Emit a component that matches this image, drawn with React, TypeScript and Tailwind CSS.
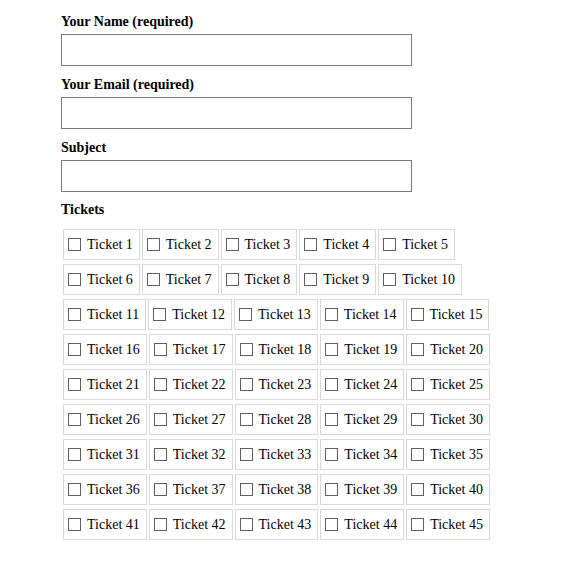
import { useState } from 'react';

const rows: number[][] = [];
for (let r = 0; r < 9; r++) {
  rows.push([1, 2, 3, 4, 5].map((c) => r * 5 + c));
}

function TicketCell({ n, checked, onToggle }: { n: number; checked: boolean; onToggle: () => void }) {
  return (
    <label className="flex items-center h-[31px] border border-[#d9d9d9] pl-[4px] pr-[6px] cursor-pointer">
      <input
        type="checkbox"
        checked={checked}
        onChange={onToggle}
        className="appearance-none w-[13px] h-[13px] border border-[#5f5f5f] bg-white rounded-none m-0 checked:bg-[#333]"
      />
      <span className="ml-[6px] text-[14px] leading-[16px] text-black">Ticket {n}</span>
    </label>
  );
}

export default function App() {
  const [name, setName] = useState('');
  const [email, setEmail] = useState('');
  const [subject, setSubject] = useState('');
  const [picked, setPicked] = useState<Record<number, boolean>>({});

  const toggle = (n: number) => setPicked((p) => ({ ...p, [n]: !p[n] }));

  return (
    <div className="min-h-screen bg-white pl-[61px] pt-[14px] font-['Liberation_Serif','Times_New_Roman',serif] text-black">
      <label className="block text-[14px] leading-[16px] font-bold">Your Name (required)</label>
      <input
        type="text"
        value={name}
        onChange={(e) => setName(e.target.value)}
        className="block mt-[4px] w-[351px] h-[32px] border border-[#7a7a7a] bg-white outline-none px-1"
      />

      <label className="block mt-[11px] text-[14px] leading-[16px] font-bold">Your Email (required)</label>
      <input
        type="text"
        value={email}
        onChange={(e) => setEmail(e.target.value)}
        className="block mt-[4px] w-[351px] h-[32px] border border-[#7a7a7a] bg-white outline-none px-1"
      />

      <label className="block mt-[11px] text-[14px] leading-[16px] font-bold">Subject</label>
      <input
        type="text"
        value={subject}
        onChange={(e) => setSubject(e.target.value)}
        className="block mt-[4px] w-[351px] h-[32px] border border-[#7a7a7a] bg-white outline-none px-1"
      />

      <div className="mt-[10px] text-[14px] leading-[16px] font-bold">Tickets</div>
      <div className="mt-[11px] ml-[2px] flex flex-col gap-[4px]">
        {rows.map((row, i) => (
          <div key={i} className="flex gap-[2px]">
            {row.map((n) => (
              <TicketCell key={n} n={n} checked={!!picked[n]} onToggle={() => toggle(n)} />
            ))}
          </div>
        ))}
      </div>
    </div>
  );
}
